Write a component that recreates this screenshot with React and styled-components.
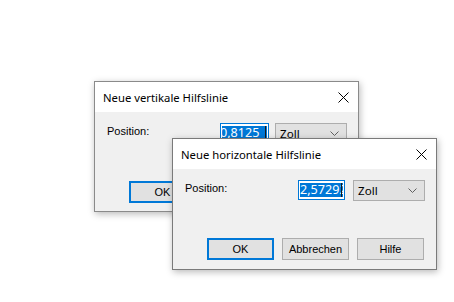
import React from "react";
import styled, { createGlobalStyle } from "styled-components";

const Global = createGlobalStyle`
  html, body { margin: 0; padding: 0; background: #ffffff; }
  #root { width: 454px; height: 302px; }
`;

const Desktop = styled.div`
  position: relative;
  width: 454px;
  height: 302px;
  background: #ffffff;
  overflow: hidden;
`;

const Window = styled.div`
  position: absolute;
  left: ${(p) => p.$x}px;
  top: ${(p) => p.$y}px;
  width: ${(p) => p.$w}px;
  height: ${(p) => p.$h}px;
  box-sizing: border-box;
  border: 1px solid ${(p) => (p.$active ? "#7a7a7a" : "#8a8a8a")};
  background: #f0f0f0;
  display: flex;
  flex-direction: column;
  box-shadow: 1px 2px 7px rgba(0, 0, 0, 0.28);
`;

const TitleBar = styled.div`
  height: 30px;
  flex: none;
  background: #ffffff;
  display: flex;
  align-items: center;
  justify-content: space-between;
  padding: 0 9px 0 8px;
  font-family: "Noto Sans", "Segoe UI", sans-serif;
  font-size: 11.3px;
  color: #000000;
`;

const CloseIcon = styled.svg`
  width: 11px;
  height: 11px;
  display: block;
`;

const Body = styled.div`
  flex: 1;
  display: flex;
  flex-direction: column;
  padding: 11px 11px 0 12px;
`;

const Row = styled.div`
  display: flex;
  align-items: flex-start;
`;

const Label = styled.div`
  flex: 1;
  font-family: "Liberation Sans", Arial, sans-serif;
  font-size: 11px;
  color: #000000;
  padding-top: 2px;
`;

const Input = styled.div`
  width: ${(p) => p.$w}px;
  height: 20px;
  box-sizing: border-box;
  border: 1px solid #0078d7;
  background: #ffffff;
  padding: 2px 1px;
  margin-right: ${(p) => p.$gap}px;
  display: flex;
`;

const Selection = styled.div`
  position: relative;
  flex: 1;
  background: #0078d7;
  color: #ffffff;
  overflow: hidden;
  white-space: nowrap;
  font-family: "Noto Sans", "Segoe UI", sans-serif;
  font-size: 12.6px;
  line-height: 14px;
  text-indent: ${(p) => p.$indent}px;
  &::after {
    content: "";
    position: absolute;
    right: 1px;
    top: 0;
    bottom: 0;
    width: 1px;
    background: #1a1a1a;
  }
`;

const Select = styled.div`
  width: 72px;
  height: 21px;
  box-sizing: border-box;
  border: 1px solid #adadad;
  background: #e1e1e1;
  display: flex;
  align-items: center;
  justify-content: space-between;
  padding: 0 7px 0 4px;
  font-family: "Noto Sans", "Segoe UI", sans-serif;
  font-size: 11.6px;
  color: #000000;
`;

const Chevron = styled.svg`
  width: 9px;
  height: 5px;
  display: block;
`;

const Buttons = styled.div`
  margin-top: 37px;
  display: flex;
  gap: 8px;
  padding-left: 22px;
`;

const Button = styled.div`
  width: 67px;
  height: 22px;
  box-sizing: border-box;
  border: ${(p) => (p.$default ? "2px solid #0078d7" : "1px solid #adadad")};
  background: #e1e1e1;
  display: flex;
  align-items: center;
  justify-content: center;
  font-family: "Liberation Sans", Arial, sans-serif;
  font-size: 11px;
  color: #000000;
`;

function Dialog({ x, y, w, h, title, value, indent, inputW, gap, active }) {
  return (
    <Window $x={x} $y={y} $w={w} $h={h} $active={active}>
      <TitleBar>
        <span>{title}</span>
        <CloseIcon viewBox="0 0 11 11">
          <path d="M0.5 0.5 L10.5 10.5 M10.5 0.5 L0.5 10.5" stroke="#000" strokeWidth="1" fill="none" />
        </CloseIcon>
      </TitleBar>
      <Body>
        <Row>
          <Label>Position:</Label>
          <Input $w={inputW} $gap={gap}>
            <Selection $indent={indent}>{value}</Selection>
          </Input>
          <Select>
            <span>Zoll</span>
            <Chevron viewBox="0 0 9 5">
              <path d="M0.5 0.5 L4.5 4.5 L8.5 0.5" stroke="#606060" strokeWidth="1" fill="none" />
            </Chevron>
          </Select>
        </Row>
        <Buttons>
          <Button $default>OK</Button>
          <Button>Abbrechen</Button>
          <Button>Hilfe</Button>
        </Buttons>
      </Body>
    </Window>
  );
}

export default function App() {
  return (
    <>
      <Global />
      <Desktop>
        <Dialog x={94} y={81} w={265} h={131} title="Neue vertikale Hilfslinie" value="0,8125" indent={-2} inputW={49} gap={6} />
        <Dialog x={172} y={138} w={265} h={132} title="Neue horizontale Hilfslinie" value="2,57292" indent={0} inputW={47} gap={8} active />
      </Desktop>
    </>
  );
}
